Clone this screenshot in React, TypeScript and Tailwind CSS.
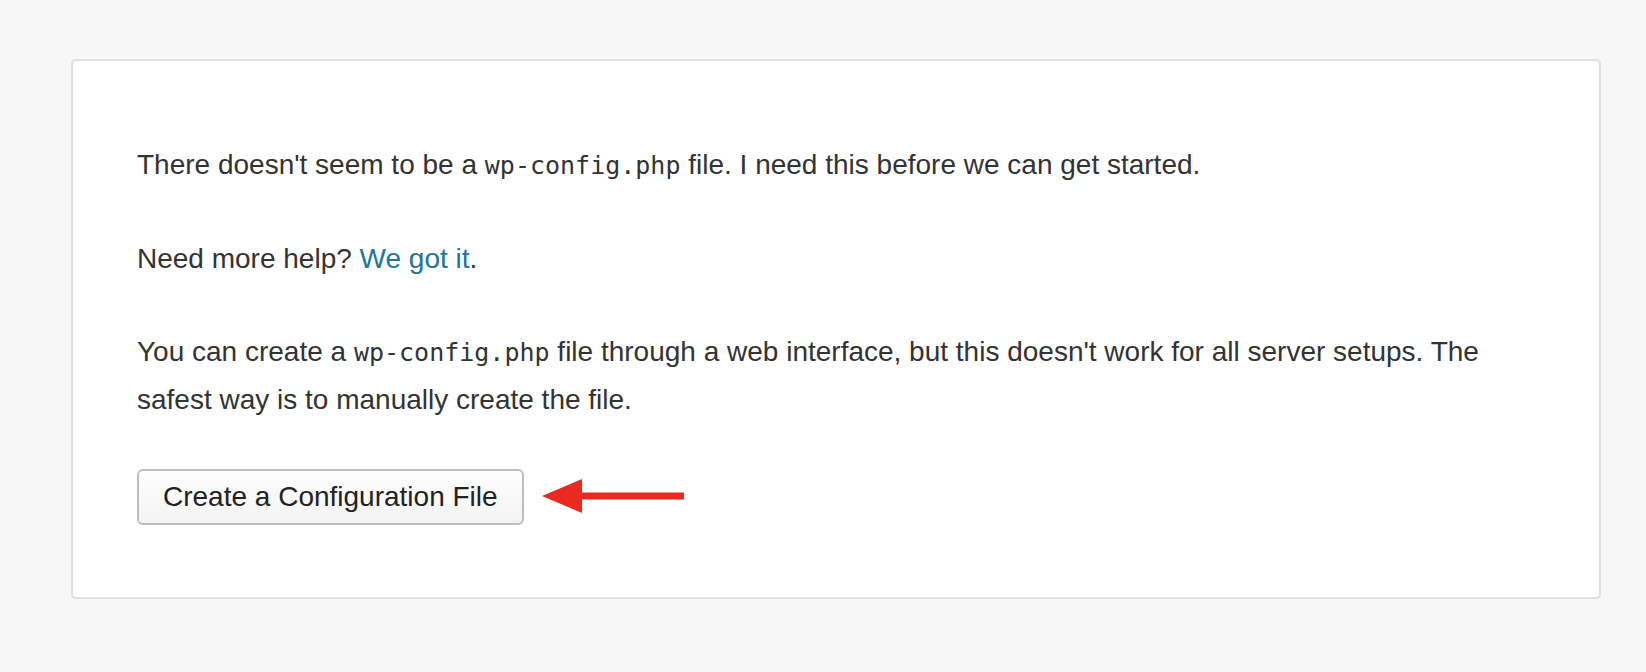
import React from "react";

export default function App() {
  const code = "font-['DejaVu_Sans_Mono',monospace] text-[25px]";
  return (
    <div className="min-h-[672px] w-full bg-[#f7f7f7] pt-[59px] pl-[71px] font-['Liberation_Sans',Arial,sans-serif] text-[#333333]">
      <div className="w-[1530px] h-[540px] rounded-[5px] border-2 border-[#e1e1e1] bg-white pt-[80px] pl-[64px] pr-[64px]">
        <p className="text-[28px] leading-[47px]">
          There doesn't seem to be a <code className={code}>wp-config.php</code> file. I need this before we can get started.
        </p>
        <p className="mt-[46px] text-[28px] leading-[47px]">
          Need more help? <a className="text-[#21759b]" href="#">We got it</a>.
        </p>
        <p className="mt-[46px] text-[28px] leading-[47px]">
          You can create a <code className={code}>wp-config.php</code> file through a web interface, but this doesn't work for all server setups. The safest way is to manually create the file.
        </p>
        <div className="mt-[46px] flex items-center">
          <button className="h-[56px] rounded-[6px] border-2 border-[#bdbdbd] bg-gradient-to-b from-[#fefefe] to-[#f3f3f3] px-[24px] text-[28px] leading-[50px] text-[#222222]">
            Create a Configuration File
          </button>
          <svg className="ml-[18px] -mt-[3px]" width="143" height="36" viewBox="0 0 143 36">
            <path d="M0 18 L40 1 L40 14.5 L142 14.5 L142 21.5 L40 21.5 L40 35 Z" fill="#ea2a20" />
          </svg>
        </div>
      </div>
    </div>
  );
}
